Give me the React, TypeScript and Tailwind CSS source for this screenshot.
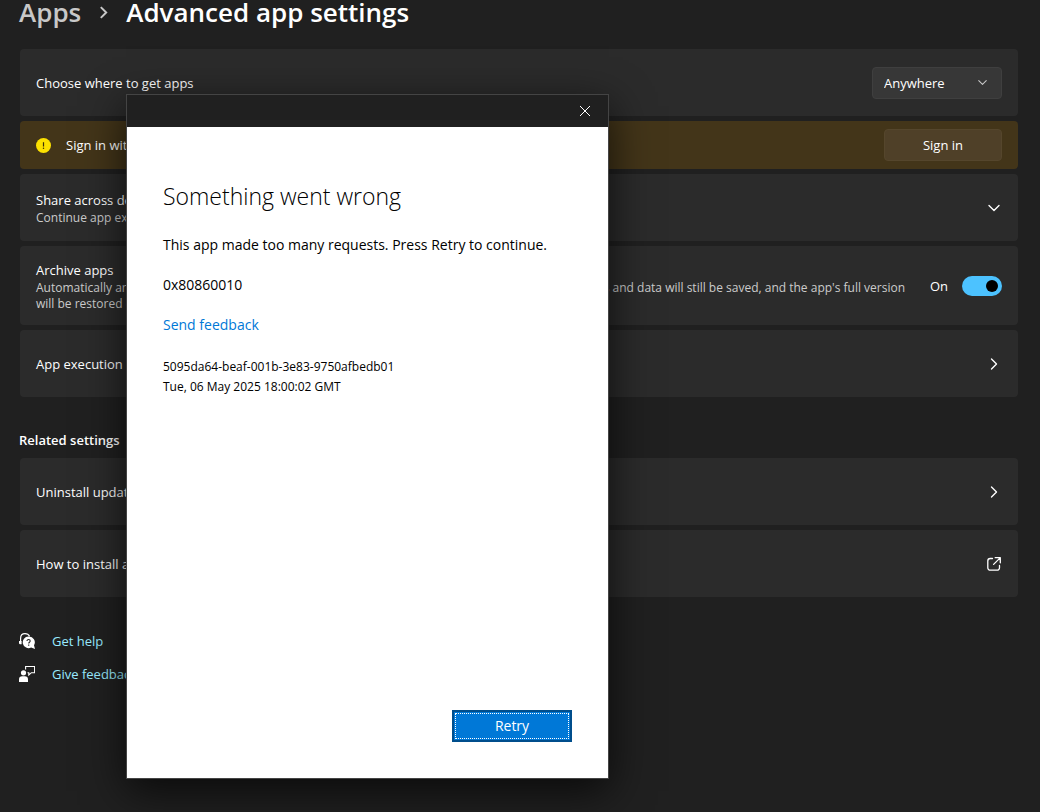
import React from 'react';

interface SettingRowProps {
  title: string;
  description?: string;
  tall?: boolean;
  children: React.ReactNode;
}

const App: React.FC = () => {
  return (
    <div className="relative min-h-screen overflow-hidden bg-[#202020] pl-[19px] pr-[22px] font-['Open_Sans',sans-serif] text-[13px] leading-5 text-white">
      {/* ======================== BREADCRUMB ======================== */}
      <header className="mb-[25px] flex items-center text-[26px] font-semibold leading-6">
        <a href="#apps" className="text-[#c8c8c8]">Apps</a>
        <svg viewBox="0 0 12 12" className="mx-4 h-[13px] w-[13px] text-[#c8c8c8]" fill="none" stroke="currentColor" strokeWidth="1.8" aria-hidden="true">
          <path d="M3.500 1l5 5-5 5" />
        </svg>
        <h1>Advanced app settings</h1>
      </header>

      {/* ======================== SETTINGS ======================== */}
      <main>
        <section className="ml-px flex flex-col gap-[5px]">
          <SettingRow title="Choose where to get apps">
            <div className="relative">
              <select
                aria-label="Choose where to get apps"
                className="h-8 w-[130px] appearance-none rounded border border-[#3f3f3f] bg-[#373737] pl-[11px] text-[13px] text-white"
              >
                <option>Anywhere</option>
              </select>
              <Chevron className="pointer-events-none absolute right-[15px] top-[11px] h-[9px] w-[9px] text-[#c8c8c8]" direction="down" />
            </div>
          </SettingRow>

          <div className="flex h-12 items-center rounded bg-[#433519] px-4">
            <svg viewBox="0 0 16 16" className="mr-[15px] h-[15px] w-[15px]" aria-hidden="true">
              <circle cx="8" cy="8" r="8" fill="#fce100" />
              <path d="M8 4.5v4.6" stroke="#3a2f0a" strokeWidth="1.3" />
              <circle cx="8" cy="11" r="0.8" fill="#3a2f0a" />
            </svg>
            <span>Sign in with Microsoft</span>
            <button className="ml-auto h-8 w-[118px] rounded border border-[#55462c] bg-[#4f4028]">
              Sign in
            </button>
          </div>

          <SettingRow title="Share across devices" description="Continue app experiences on your other devices">
            <button aria-label="Expand share across devices" className="mr-[2px]">
              <Chevron className="h-3 w-3" direction="down" />
            </button>
          </SettingRow>

          <SettingRow
            tall
            title="Archive apps"
            description="Automatically archive apps you don't use frequently to free up storage space and bandwidth. Your files and data will still be saved, and the app's full version will be restored on your next use if it's still available."
          >
            <label htmlFor="archive" className="mr-[14px]">On</label>
            <input
              id="archive"
              type="checkbox"
              role="switch"
              defaultChecked
              className="flex h-5 w-10 appearance-none items-center justify-end rounded-full bg-[#4cc2ff] pr-1 before:h-3 before:w-3 before:rounded-full before:bg-black"
            />
          </SettingRow>

          <SettingRow title="App execution aliases">
            <button aria-label="App execution aliases" className="mr-[2px]">
              <Chevron className="h-3 w-3" direction="right" />
            </button>
          </SettingRow>
        </section>

        <h2 className="mb-2 mt-[33px] font-semibold">Related settings</h2>
        <section className="ml-px flex flex-col gap-[5px]">
          <SettingRow title="Uninstall updates">
            <button aria-label="Uninstall updates" className="mr-[2px]">
              <Chevron className="h-3 w-3" direction="right" />
            </button>
          </SettingRow>
          <SettingRow title="How to install apps">
            <a href="#install" aria-label="How to install apps">
              <svg viewBox="0 0 16 16" className="h-4 w-4" fill="none" stroke="currentColor" strokeWidth="1.3" strokeLinecap="round" strokeLinejoin="round">
                <path d="M6.500 2.500H4.200A2.400 2.400 0 0 0 1.800 4.900v6.900a2.400 2.400 0 0 0 2.400 2.400h6.900a2.400 2.400 0 0 0 2.400-2.400V9.500" />
                <path d="M9.200 1.700h5.100v5.100M14.100 1.900 7.600 8.400" />
              </svg>
            </a>
          </SettingRow>
        </section>

        <nav className="mt-[34px] flex flex-col gap-[13px] text-[#99ebff]">
          <a href="#help" className="flex items-center gap-[17px]">
            <HelpIcon />
            Get help
          </a>
          <a href="#feedback" className="flex items-center gap-[17px]">
            <FeedbackIcon />
            Give feedback
          </a>
        </nav>
      </main>

      {/* ======================== ERROR DIALOG ======================== */}
      <div
        role="dialog"
        aria-labelledby="error-title"
        className="absolute left-[126px] top-[94px] flex h-[685px] w-[483px] flex-col border border-[#444444] bg-white text-black shadow-[0_12px_40px_rgba(0,0,0,0.7)]"
      >
        <div className="flex h-8 shrink-0 items-center justify-end bg-[#202020] px-[17px]">
          <button aria-label="Close" className="text-white">
            <svg viewBox="0 0 12 12" className="h-3 w-3" stroke="currentColor" strokeWidth="1">
              <path d="M1 1l10 10M11 1L1 11" />
            </svg>
          </button>
        </div>
        <div className="flex flex-1 flex-col px-9 pb-9 pt-[53px] text-[14px]">
          <h2 id="error-title" className="mb-[23px] text-[23px] font-light leading-8">Something went wrong</h2>
          <p className="mb-5">This app made too many requests. Press Retry to continue.</p>
          <p className="mb-5">0x80860010</p>
          <a href="#send" className="mb-[22px] self-start text-[#0078d7]">Send feedback</a>
          <p className="text-[12px]">5095da64-beaf-001b-3e83-9750afbedb01</p>
          <p className="text-[12px]">Tue, 06 May 2025 18:00:02 GMT</p>
          <button className="mt-auto flex h-8 w-[120px] self-end border-2 border-[#004e8c] bg-[#0078d7] p-px text-white">
            <span className="flex h-full w-full items-center justify-center border border-dotted border-white">Retry</span>
          </button>
        </div>
      </div>
    </div>
  );
};

/* ======================== SETTING ROW ======================== */
const SettingRow: React.FC<SettingRowProps> = ({ title, description, tall, children }) => (
  <div className={`flex items-center rounded bg-[#2b2b2b] px-4 ${tall ? 'h-[79px]' : 'h-[67px]'}`}>
    <div className="min-w-0 flex-1 pr-6">
      <h3>{title}</h3>
      {description && <p className="text-[12px] leading-4 text-[#cccccc]">{description}</p>}
    </div>
    {children}
  </div>
);

/* ======================== ICONS ======================== */
const Chevron: React.FC<{ className: string; direction: 'down' | 'right' }> = ({ className, direction }) => (
  <svg viewBox="0 0 12 12" className={className} fill="none" stroke="currentColor" strokeWidth="1.4" strokeLinecap="round" strokeLinejoin="round" aria-hidden="true">
    <path d={direction === 'down' ? 'M1 3.5l5 5 5-5' : 'M3.5 1l5 5-5 5'} />
  </svg>
);

const HelpIcon: React.FC = () => (
  <svg viewBox="0 0 16 16" className="h-4 w-4" fill="none" aria-hidden="true">
    <path d="M1.600 9V5.500C1.600 2.500 3.600 0.700 6 0.700s3.800 1.100 4.600 2.600" stroke="white" strokeWidth="1.200" />
    <path d="M0 8h2.600v3.200H1.200A1.200 1.200 0 0 1 0 10z" fill="white" />
    <path d="M9.500 3.500a5.800 5.800 0 1 0 2.600 11L16 16l-1-3.800A5.800 5.800 0 0 0 9.500 3.500z" fill="white" />
    <path d="M8 8c0-2.100 3.200-2 3.200 0 0 1.200-1.500 1.300-1.500 2.500M9.700 11.500v1.200" stroke="#202020" strokeWidth="1.100" />
  </svg>
);

const FeedbackIcon: React.FC = () => (
  <svg viewBox="0 0 16 16" className="h-4 w-4" fill="none" aria-hidden="true">
    <circle cx="4.500" cy="6.800" r="2.600" fill="white" />
    <path d="M0 16v-2.500A3.200 3.200 0 0 1 3.200 10.300h2.600A3.200 3.200 0 0 1 9 13.500V16z" fill="white" />
    <path d="M6.600 3.500v-3h9v6.200h-3.200L9.800 9V6.700H8.500" stroke="white" strokeWidth="1.100" />
  </svg>
);

export default App;
